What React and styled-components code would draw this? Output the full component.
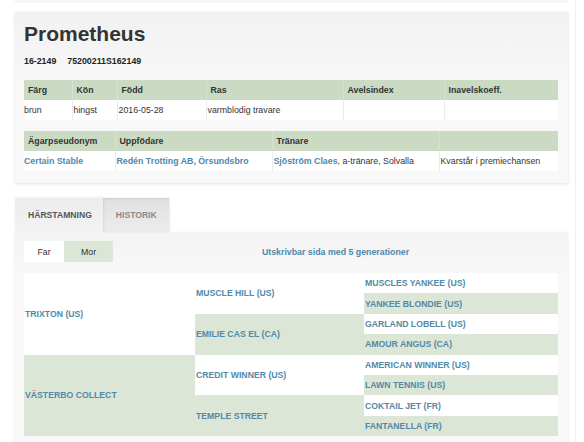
import React from 'react'
import styled, { createGlobalStyle } from 'styled-components'

const GlobalStyle = createGlobalStyle`
  body {
    margin: 0;
    background: #fff;
    font-family: "Liberation Sans", Arial, sans-serif;
    color: #333;
  }
`

const Page = styled.div`
  width: 553px;
  padding: 0 7px 20px 15px;
  border-right: 1px solid #f0f0f0;
  min-height: 442px;
`

const Stub = styled.div`
  height: 1px;
  background: #f6f6f6;
  box-shadow: 0 1px 2px rgba(0, 0, 0, 0.12);
`

const Card = styled.div`
  margin-top: 11px;
  padding: 9px 10px 12px 9px;
  background: linear-gradient(#f1f1f1, #f8f8f8 70px);
  box-shadow: 0 1px 3px rgba(0, 0, 0, 0.13);
`

const Title = styled.h1`
  margin: 0;
  font-size: 21px;
  line-height: 26px;
  font-weight: bold;
  color: #333;
`

const Ids = styled.div`
  display: flex;
  gap: 11px;
  margin-top: 9px;
  font-size: 8.8px;
  font-weight: bold;
  color: #222;
`

const Table = styled.table`
  width: 534px;
  table-layout: fixed;
  border-collapse: collapse;
  margin-top: ${p => p.$top || 0}px;
  font-size: 8.8px;
`

const Th = styled.th`
  height: 20px;
  padding: 0 0 0 4px;
  background: #cbdbc3;
  text-align: left;
  font-weight: bold;
  color: #333;
  border-left: 1px solid #d6e2d0;
  &:first-child { border-left: none; }
`

const Td = styled.td`
  height: 20px;
  padding: 0 0 0 1px;
  background: #fff;
  color: #333;
  border-left: 1px solid #ececec;
  white-space: nowrap;
  &:first-child { border-left: none; padding-left: 0; }
`

const A = styled.span`
  color: #4c89ae;
  font-weight: bold;
`

const Tabs = styled.div`
  display: flex;
  margin-top: 15px;
`

const Tab = styled.div`
  height: 34px;
  display: flex;
  align-items: center;
  padding: 0 ${p => (p.$active ? 11 : 12)}px 0 13px;
  font-size: 8.6px;
  font-weight: bold;
  color: ${p => (p.$active ? '#555' : '#8a8a8a')};
  background: ${p =>
    p.$active
      ? 'linear-gradient(#ececec, #f3f3f3)'
      : 'linear-gradient(#e0e0e0, #ececec)'};
  box-shadow: ${p =>
    p.$active
      ? '0 -1px 2px rgba(0,0,0,0.08)'
      : 'inset 1px 1px 2px rgba(0,0,0,0.08), 1px 0 2px rgba(0,0,0,0.08)'};
`

const Panel = styled.div`
  padding: 9px 10px 6px 9px;
  background: linear-gradient(#f3f3f3, #f8f8f8 40px);
  box-shadow: 0 1px 3px rgba(0, 0, 0, 0.1);
`

const Bar = styled.div`
  display: flex;
  align-items: center;
`

const Toggle = styled.div`
  display: flex;
`

const ToggleBtn = styled.div`
  width: ${p => p.$w}px;
  height: 21px;
  display: flex;
  align-items: center;
  justify-content: center;
  font-size: 8.8px;
  color: #333;
  background: ${p => (p.$on ? '#fff' : '#dce6d6')};
`

const PrintLink = styled.div`
  flex: 1;
  text-align: center;
  font-size: 8.8px;
  font-weight: bold;
  color: #4c89ae;
`

const Pedigree = styled.div`
  margin-top: 11px;
  display: grid;
  grid-template-columns: 171px 169px 194px;
  grid-template-rows: repeat(8, 20.4px);
`

const Horse = styled.div`
  grid-column: ${p => p.$col};
  grid-row: span ${p => p.$span};
  display: flex;
  align-items: center;
  padding-left: 1px;
  background: ${p => (p.$green ? '#dce6d6' : '#fff')};
  font-size: 8.7px;
  font-weight: bold;
  color: #5289a8;
  text-transform: uppercase;
  white-space: nowrap;
`

const pedigree = [
  { col: 1, span: 4, name: 'TRIXTON (US)', green: false },
  { col: 2, span: 2, name: 'MUSCLE HILL (US)', green: false },
  { col: 3, span: 1, name: 'MUSCLES YANKEE (US)', green: false },
  { col: 3, span: 1, name: 'YANKEE BLONDIE (US)', green: true },
  { col: 2, span: 2, name: 'EMILIE CAS EL (CA)', green: true },
  { col: 3, span: 1, name: 'GARLAND LOBELL (US)', green: false },
  { col: 3, span: 1, name: 'AMOUR ANGUS (CA)', green: true },
  { col: 1, span: 4, name: 'VÄSTERBO COLLECT', green: true },
  { col: 2, span: 2, name: 'CREDIT WINNER (US)', green: false },
  { col: 3, span: 1, name: 'AMERICAN WINNER (US)', green: false },
  { col: 3, span: 1, name: 'LAWN TENNIS (US)', green: true },
  { col: 2, span: 2, name: 'TEMPLE STREET', green: true },
  { col: 3, span: 1, name: 'COKTAIL JET (FR)', green: false },
  { col: 3, span: 1, name: 'FANTANELLA (FR)', green: true },
]

export default function App() {
  return (
    <>
      <GlobalStyle />
      <Page>
        <Stub />
        <Card>
          <Title>Prometheus</Title>
          <Ids>
            <span>16-2149</span>
            <span>75200211S162149</span>
          </Ids>

          <Table $top={14}>
            <colgroup>
              <col style={{ width: 48 }} />
              <col style={{ width: 45 }} />
              <col style={{ width: 89 }} />
              <col style={{ width: 137 }} />
              <col style={{ width: 101 }} />
              <col style={{ width: 114 }} />
            </colgroup>
            <thead>
              <tr>
                <Th>Färg</Th>
                <Th>Kön</Th>
                <Th>Född</Th>
                <Th>Ras</Th>
                <Th>Avelsindex</Th>
                <Th>Inavelskoeff.</Th>
              </tr>
            </thead>
            <tbody>
              <tr>
                <Td>brun</Td>
                <Td>hingst</Td>
                <Td>2016-05-28</Td>
                <Td>varmblodig travare</Td>
                <Td />
                <Td />
              </tr>
            </tbody>
          </Table>

          <Table $top={11}>
            <colgroup>
              <col style={{ width: 91 }} />
              <col style={{ width: 157 }} />
              <col style={{ width: 167 }} />
              <col style={{ width: 119 }} />
            </colgroup>
            <thead>
              <tr>
                <Th>Ägarpseudonym</Th>
                <Th>Uppfödare</Th>
                <Th>Tränare</Th>
                <Th />
              </tr>
            </thead>
            <tbody>
              <tr>
                <Td><A>Certain Stable</A></Td>
                <Td><A>Redén Trotting AB, Örsundsbro</A></Td>
                <Td><A>Sjöström Claes</A>, a-tränare, Solvalla</Td>
                <Td>Kvarstår i premiechansen</Td>
              </tr>
            </tbody>
          </Table>
        </Card>

        <Tabs>
          <Tab $active>HÄRSTAMNING</Tab>
          <Tab>HISTORIK</Tab>
        </Tabs>
        <Panel>
          <Bar>
            <Toggle>
              <ToggleBtn $w={40} $on>Far</ToggleBtn>
              <ToggleBtn $w={49}>Mor</ToggleBtn>
            </Toggle>
            <PrintLink>Utskrivbar sida med 5 generationer</PrintLink>
          </Bar>
          <Pedigree>
            {pedigree.map(h => (
              <Horse key={h.name} $col={h.col} $span={h.span} $green={h.green}>
                {h.name}
              </Horse>
            ))}
          </Pedigree>
        </Panel>
      </Page>
    </>
  )
}
